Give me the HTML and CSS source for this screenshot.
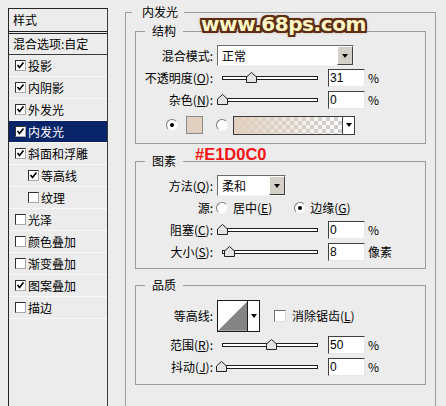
FILE: index.html
```html
<!DOCTYPE html>
<html lang="zh-CN">
<head>
  <meta charset="UTF-8">
  <title>图层样式 - 内发光</title>
  <link rel="stylesheet" href="styles.css">
</head>
<body>
  <div class="dialog">
    <div class="styles-list">
      <div class="list-head">样式</div>
      <div class="list-blend">混合选项:自定</div>
      <div class="item"><span class="check on"><svg viewBox="0 0 9 9"><path d="M1.5 4 L3.5 6.5 L7.5 1.5"/></svg></span>投影</div>
      <div class="item"><span class="check on"><svg viewBox="0 0 9 9"><path d="M1.5 4 L3.5 6.5 L7.5 1.5"/></svg></span>内阴影</div>
      <div class="item"><span class="check on"><svg viewBox="0 0 9 9"><path d="M1.5 4 L3.5 6.5 L7.5 1.5"/></svg></span>外发光</div>
      <div class="item selected"><span class="check on"><svg viewBox="0 0 9 9"><path d="M1.5 4 L3.5 6.5 L7.5 1.5"/></svg></span>内发光</div>
      <div class="item"><span class="check on"><svg viewBox="0 0 9 9"><path d="M1.5 4 L3.5 6.5 L7.5 1.5"/></svg></span>斜面和浮雕</div>
      <div class="item sub"><span class="check on"><svg viewBox="0 0 9 9"><path d="M1.5 4 L3.5 6.5 L7.5 1.5"/></svg></span>等高线</div>
      <div class="item sub"><span class="check"></span>纹理</div>
      <div class="item"><span class="check"></span>光泽</div>
      <div class="item"><span class="check"></span>颜色叠加</div>
      <div class="item"><span class="check"></span>渐变叠加</div>
      <div class="item"><span class="check on"><svg viewBox="0 0 9 9"><path d="M1.5 4 L3.5 6.5 L7.5 1.5"/></svg></span>图案叠加</div>
      <div class="item"><span class="check"></span>描边</div>
    </div>

    <fieldset class="group outer">
      <legend>内发光</legend>

      <fieldset class="group structure">
        <legend>结构</legend>
        <div class="row row-select">
          <label class="lbl">混合模式:</label>
          <div class="select wide"><span>正常</span><i class="drop"><b></b></i></div>
        </div>
        <div class="row first-slider">
          <label class="lbl">不透明度(<u>O</u>):</label>
          <div class="slider"><div class="track"></div><svg class="thumb" style="left:29px" viewBox="0 0 11 11"><path d="M0.5 10.5 V5 L5.5 0.5 L10.5 5 V10.5 Z"/></svg></div>
          <input class="field" value="31" readonly><span class="unit">%</span>
        </div>
        <div class="row">
          <label class="lbl">杂色(<u>N</u>):</label>
          <div class="slider"><div class="track"></div><svg class="thumb" style="left:-0.5px" viewBox="0 0 11 11"><path d="M0.5 10.5 V5 L5.5 0.5 L10.5 5 V10.5 Z"/></svg></div>
          <input class="field" value="0" readonly><span class="unit">%</span>
        </div>
        <div class="row color-row">
          <span class="radio on"></span>
          <span class="swatch"></span>
          <span class="radio"></span>
          <div class="gradient"><span class="grad-fill"></span><i class="mini-drop"><b></b></i></div>
        </div>
      </fieldset>

      <fieldset class="group elements">
        <legend>图素</legend>
        <div class="row row-select">
          <label class="lbl">方法(<u>Q</u>):</label>
          <div class="select narrow"><span>柔和</span><i class="drop"><b></b></i></div>
        </div>
        <div class="row source-row">
          <label class="lbl">源:</label>
          <span class="radio"></span><span class="opt">居中(<u>E</u>)</span>
          <span class="radio on edge"></span><span class="opt">边缘(<u>G</u>)</span>
        </div>
        <div class="row">
          <label class="lbl">阻塞(<u>C</u>):</label>
          <div class="slider"><div class="track"></div><svg class="thumb" style="left:-0.5px" viewBox="0 0 11 11"><path d="M0.5 10.5 V5 L5.5 0.5 L10.5 5 V10.5 Z"/></svg></div>
          <input class="field" value="0" readonly><span class="unit">%</span>
        </div>
        <div class="row">
          <label class="lbl">大小(<u>S</u>):</label>
          <div class="slider"><div class="track"></div><svg class="thumb" style="left:6.5px" viewBox="0 0 11 11"><path d="M0.5 10.5 V5 L5.5 0.5 L10.5 5 V10.5 Z"/></svg></div>
          <input class="field" value="8" readonly><span class="unit">像素</span>
        </div>
      </fieldset>

      <fieldset class="group quality">
        <legend>品质</legend>
        <div class="row contour-row">
          <label class="lbl">等高线:</label>
          <div class="contour">
            <svg class="curve" viewBox="0 0 30 30"><path d="M0 30 L30 0 V30 Z"/></svg>
            <i class="mini-drop"><b></b></i>
          </div>
          <span class="check plain"></span><span class="opt">消除锯齿(<u>L</u>)</span>
        </div>
        <div class="row range-row">
          <label class="lbl">范围(<u>R</u>):</label>
          <div class="slider"><div class="track"></div><svg class="thumb" style="left:48.5px" viewBox="0 0 11 11"><path d="M0.5 10.5 V5 L5.5 0.5 L10.5 5 V10.5 Z"/></svg></div>
          <input class="field" value="50" readonly><span class="unit">%</span>
        </div>
        <div class="row">
          <label class="lbl">抖动(<u>J</u>):</label>
          <div class="slider"><div class="track"></div><svg class="thumb" style="left:-1px" viewBox="0 0 11 11"><path d="M0.5 10.5 V5 L5.5 0.5 L10.5 5 V10.5 Z"/></svg></div>
          <input class="field" value="0" readonly><span class="unit">%</span>
        </div>
      </fieldset>
    </fieldset>

    <div class="watermark">www.68ps.com</div>
    <div class="color-note">#E1D0C0</div>
  </div>
</body>
</html>
```

FILE: styles.css
```css
body {
  margin: 0;
  background: #ececec;
  color: #000;
  font: 12px/16px "Noto Sans CJK SC", sans-serif;
  overflow: hidden;
}
.dialog {
  position: relative;
  display: flex;
  align-items: flex-start;
  padding-top: 4px;
  height: 402px;
  overflow: hidden;
}

/* left list */
.styles-list {
  width: 100px;
  height: 420px;
  margin: 4px 0 0 8px;
  box-sizing: border-box;
  border: 1px solid #262626;
  border-right-color: #3a3a3a;
}
.list-head {
  height: 22px;
  line-height: 22px;
  padding-left: 4px;
  border-bottom: 3px double #222;
}
.list-blend {
  height: 20px;
  line-height: 20px;
  padding-left: 4px;
  border-bottom: 1px solid #3a3a3a;
}
.item {
  display: flex;
  align-items: center;
  height: 21px;
  padding-left: 6px;
  border-bottom: 1px solid #f9f9f9;
}
.item.sub {
  padding-left: 19px;
}
.item.selected {
  background: #0a246a;
  color: #fff;
}
.check {
  width: 11px;
  height: 11px;
  box-sizing: border-box;
  margin-right: 2px;
  border: 1px solid;
  border-color: #303030 #a8a8a8 #a8a8a8 #303030;
  background: #fff;
  flex: none;
}
.check svg {
  display: block;
  width: 9px;
  height: 9px;
}
.check path {
  fill: none;
  stroke: #000;
  stroke-width: 1.6;
}
.check.plain {
  width: 12px;
  height: 12px;
  margin: 0 6px 0 14px;
  border-color: #707070 #dcdcdc #dcdcdc #707070;
}

/* group boxes */
fieldset {
  margin: 0;
  min-width: 0;
}
.group {
  border: 1px solid #9c9c9c;
  box-sizing: border-box;
}
.group legend {
  padding: 0 7px;
  margin-left: 9px;
  line-height: 16px;
}
.outer {
  width: 311px;
  margin-left: 17px;
  padding: 3px 9px 60px;
}
.outer > legend {
  margin-left: -3px;
  padding: 0 6px 0 10px;
}
.structure,
.elements,
.quality {
  width: 100%;
  padding: 0;
}
.structure {
  padding: 6px 0 8px;
}
.elements {
  margin-top: 9px;
  padding: 6px 0 5px;
}
.quality {
  margin-top: 8px;
  padding: 7px 0 6px;
}

/* rows */
.row {
  display: flex;
  align-items: center;
  height: 22px;
}
.row-select {
  height: 21px;
}
.first-slider {
  margin-top: 1px;
}
.lbl {
  width: 77px;
  flex: none;
  text-align: right;
}
.select {
  display: flex;
  height: 21px;
  margin-left: 4px;
  box-sizing: border-box;
  border: 1px solid;
  border-color: #6c6c6c #f4f4f4 #f4f4f4 #6c6c6c;
  background: #fff;
}
.select span {
  flex: 1;
  padding-left: 4px;
  line-height: 19px;
}
.select.wide {
  width: 137px;
}
.select.narrow {
  width: 69px;
}
.drop {
  display: flex;
  align-items: center;
  justify-content: center;
  width: 16px;
  box-sizing: border-box;
  border: 1px solid;
  border-color: #fff #404040 #404040 #fff;
  background: #d4d0c8;
}
.drop b,
.mini-drop b {
  width: 0;
  height: 0;
  border-top: 4px solid #000;
  border-left: 3px solid transparent;
  border-right: 3px solid transparent;
}

/* sliders */
.slider {
  position: relative;
  width: 106px;
  height: 22px;
  margin: 0 5px 0 4px;
  flex: none;
}
.track {
  height: 2px;
  margin: 9px 5px 0;
  border: 1px solid #1e1e1e;
  background: #fff;
}
.thumb {
  position: absolute;
  top: 5px;
  width: 11px;
  height: 11px;
}
.thumb path {
  fill: #e4e4e4;
  stroke: #222;
  stroke-width: 1;
}
.field {
  width: 37px;
  height: 18px;
  box-sizing: border-box;
  margin: 0;
  padding: 0 1px;
  border: 1px solid;
  border-color: #404040 #e6e6e6 #e6e6e6 #404040;
  background: #fff;
  font: 12px "Liberation Sans", Arial, sans-serif;
  color: #000;
  outline: none;
}
.unit {
  margin-left: 3px;
}

/* colour row */
.color-row {
  height: 20px;
  margin-top: 4px;
  padding-left: 30px;
}
.radio {
  position: relative;
  width: 12px;
  height: 12px;
  box-sizing: border-box;
  border-radius: 50%;
  border: 1px solid;
  border-color: #7c7c7c #f2f2f2 #f2f2f2 #7c7c7c;
  background: #fff;
  flex: none;
}
.radio.on::after {
  content: "";
  position: absolute;
  left: 3px;
  top: 3px;
  width: 4px;
  height: 4px;
  border-radius: 50%;
  background: #000;
}
.swatch {
  width: 17px;
  height: 18px;
  margin: 0 13px 0 8px;
  box-sizing: border-box;
  border: 1px solid #8a8a8a;
  background: #e1d0c0;
}
.gradient {
  display: flex;
  width: 122px;
  height: 19px;
  margin-left: 5px;
  box-sizing: border-box;
  border: 1px solid #3c3c3c;
}
.grad-fill {
  flex: 1;
  background:
    linear-gradient(to right, #e1d0c0, rgba(225, 208, 192, 0)),
    conic-gradient(#cfcfcf 25%, #fff 0 50%, #cfcfcf 0 75%, #fff 0) 0 0 / 8px 8px;
}
.mini-drop {
  display: flex;
  align-items: center;
  justify-content: center;
  width: 11px;
  border-left: 1px solid #3c3c3c;
  background: #fff;
}

/* source row */
.source-row {
  margin-top: 1px;
}
.source-row .radio {
  margin-left: 3px;
}
.source-row .radio.edge {
  margin-left: 22px;
}
.opt {
  margin-left: 5px;
}
.source-row .radio.edge + .opt {
  margin-left: 4px;
}

/* quality */
.contour-row {
  height: 32px;
}
.contour {
  display: flex;
  width: 43px;
  height: 32px;
  margin-left: 4px;
  box-sizing: border-box;
  border: 1px solid #1a1a1a;
  background: #fff;
}
.curve {
  width: 30px;
  height: 30px;
  display: block;
}
.curve path {
  fill: #848484;
}
.contour .mini-drop {
  border-left-color: #1a1a1a;
}
.quality .opt {
  margin-left: 0;
}
.range-row {
  margin-top: 2px;
}

/* overlays on the screenshot */
.watermark {
  position: absolute;
  left: 201px;
  top: 14px;
  font: bold 20px/20px "DejaVu Sans", sans-serif;
  letter-spacing: -0.4px;
  color: #fff8c6;
  text-shadow:
    2px 0 0 #5c2d14, -2px 0 0 #5c2d14, 0 2px 0 #5c2d14, 0 -2px 0 #5c2d14,
    2px 2px 0 #5c2d14, -2px -2px 0 #5c2d14, 2px -2px 0 #5c2d14, -2px 2px 0 #5c2d14,
    0 0 4px #8a4a20;
}
.color-note {
  position: absolute;
  left: 195px;
  top: 146px;
  font: bold 16.5px/16px "Liberation Sans", Arial, sans-serif;
  color: #f41414;
}
```
